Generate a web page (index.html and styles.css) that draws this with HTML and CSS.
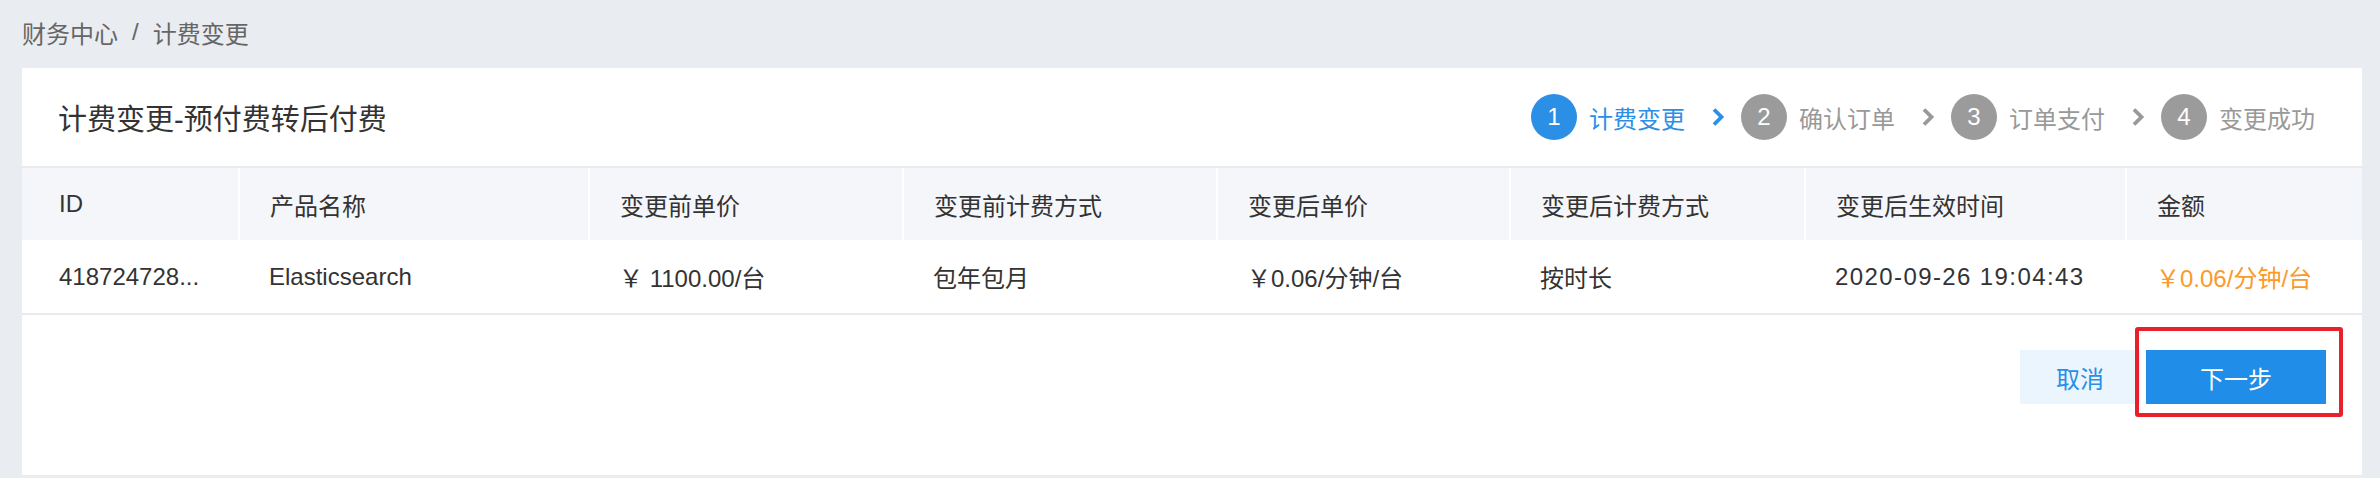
FILE: index.html
```html
<!DOCTYPE html>
<html>
<head>
    <title>计费变更</title>
    <link rel="stylesheet" href="styles.css">
</head>
<body>
    <div class="page">
        <div class="breadcrumb">
            <span>财务中心</span>
            <span class="sep">/</span>
            <span>计费变更</span>
        </div>

        <div class="card">
            <div class="card-head">
                <h2 class="title">计费变更-预付费转后付费</h2>
                <div class="steps">
                    <div class="step active"><span class="num">1</span><span class="label">计费变更</span></div>
                    <svg class="arrow active" width="14" height="18" viewBox="0 0 14 18"><polyline points="3,1.5 10.5,9 3,16.5" /></svg>
                    <div class="step"><span class="num">2</span><span class="label">确认订单</span></div>
                    <svg class="arrow" width="14" height="18" viewBox="0 0 14 18"><polyline points="3,1.5 10.5,9 3,16.5" /></svg>
                    <div class="step"><span class="num">3</span><span class="label">订单支付</span></div>
                    <svg class="arrow" width="14" height="18" viewBox="0 0 14 18"><polyline points="3,1.5 10.5,9 3,16.5" /></svg>
                    <div class="step"><span class="num">4</span><span class="label">变更成功</span></div>
                </div>
            </div>

            <table class="grid">
                <colgroup>
                    <col style="width: 217px">
                    <col style="width: 350px">
                    <col style="width: 314px">
                    <col style="width: 314px">
                    <col style="width: 293px">
                    <col style="width: 295px">
                    <col style="width: 321px">
                    <col style="width: 236px">
                </colgroup>
                <thead>
                    <tr>
                        <th>ID</th>
                        <th>产品名称</th>
                        <th>变更前单价</th>
                        <th>变更前计费方式</th>
                        <th>变更后单价</th>
                        <th>变更后计费方式</th>
                        <th>变更后生效时间</th>
                        <th>金额</th>
                    </tr>
                </thead>
                <tbody>
                    <tr>
                        <td>418724728...</td>
                        <td>Elasticsearch</td>
                        <td>￥ 1100.00/台</td>
                        <td>包年包月</td>
                        <td>￥0.06/分钟/台</td>
                        <td>按时长</td>
                        <td class="time">2020-09-26 19:04:43</td>
                        <td class="amount">￥0.06/分钟/台</td>
                    </tr>
                </tbody>
            </table>

            <div class="actions">
                <button class="btn btn-cancel">取消</button>
                <div class="next-wrap">
                    <button class="btn btn-next">下一步</button>
                    <div class="highlight"></div>
                </div>
            </div>
        </div>
    </div>
</body>
</html>
```

FILE: styles.css
```css
body {
    margin: 0;
    background-color: #e9ecf1;
    font-family: "Liberation Sans", "Noto Sans CJK SC", sans-serif;
    color: #333;
}
.page {
    padding: 0 18px 3px 22px;
}
.breadcrumb {
    height: 68px;
    padding-bottom: 4px;
    box-sizing: border-box;
    display: flex;
    align-items: center;
    font-size: 24px;
    color: #666;
}
.breadcrumb .sep {
    margin: 0 14px;
}
.card {
    background: white;
    height: 407px;
}
.card-head {
    height: 98px;
    border-bottom: 2px solid #e8ebf0;
    display: flex;
    align-items: center;
    justify-content: space-between;
    padding: 0 47px 0 36px;
}
.title {
    margin: 0;
    font-size: 29px;
    font-weight: normal;
    color: #333;
}
.steps {
    display: flex;
    align-items: center;
}
.step {
    display: flex;
    align-items: center;
    font-size: 24px;
    color: #999;
}
.step .num {
    width: 46px;
    height: 46px;
    border-radius: 50%;
    background: #9b9b9b;
    color: white;
    display: flex;
    align-items: center;
    justify-content: center;
    margin-right: 12px;
}
.step.active {
    color: #2b8fe6;
}
.step.active .num {
    background: #2b8fe6;
}
.arrow {
    margin: 0 16px 0 26px;
    fill: none;
    stroke: #999;
    stroke-width: 3.8;
}
.arrow.active {
    stroke: #2b8fe6;
}
.grid {
    width: 100%;
    border-collapse: collapse;
    table-layout: fixed;
    font-size: 24px;
}
.grid th {
    height: 72px;
    background: #f5f6fa;
    font-weight: normal;
    text-align: left;
    padding: 0 30px;
    border-right: 2px solid white;
    color: #333;
}
.grid th:last-child {
    border-right: none;
}
.grid td {
    height: 73px;
    padding: 0 30px;
    border-bottom: 2px solid #e8ebf0;
    white-space: nowrap;
    overflow: hidden;
}
.grid th:first-child, .grid td:first-child {
    padding-left: 37px;
}
.grid td.time {
    letter-spacing: 1.4px;
}
.amount {
    color: #fa9a2b;
}
.actions {
    display: flex;
    justify-content: flex-end;
    padding: 35px 36px 0 0;
}
.btn {
    height: 54px;
    border: none;
    font-family: inherit;
    font-size: 24px;
    cursor: pointer;
}
.btn-cancel {
    width: 120px;
    background: #eaf5fe;
    color: #2b8fe6;
}
.next-wrap {
    position: relative;
    margin-left: 6px;
}
.btn-next {
    width: 180px;
    background: #208ee8;
    color: white;
}
.highlight {
    position: absolute;
    left: -11px;
    top: -23px;
    right: -17px;
    bottom: -13px;
    border: 4px solid #e8202c;
    border-radius: 3px;
}
```
